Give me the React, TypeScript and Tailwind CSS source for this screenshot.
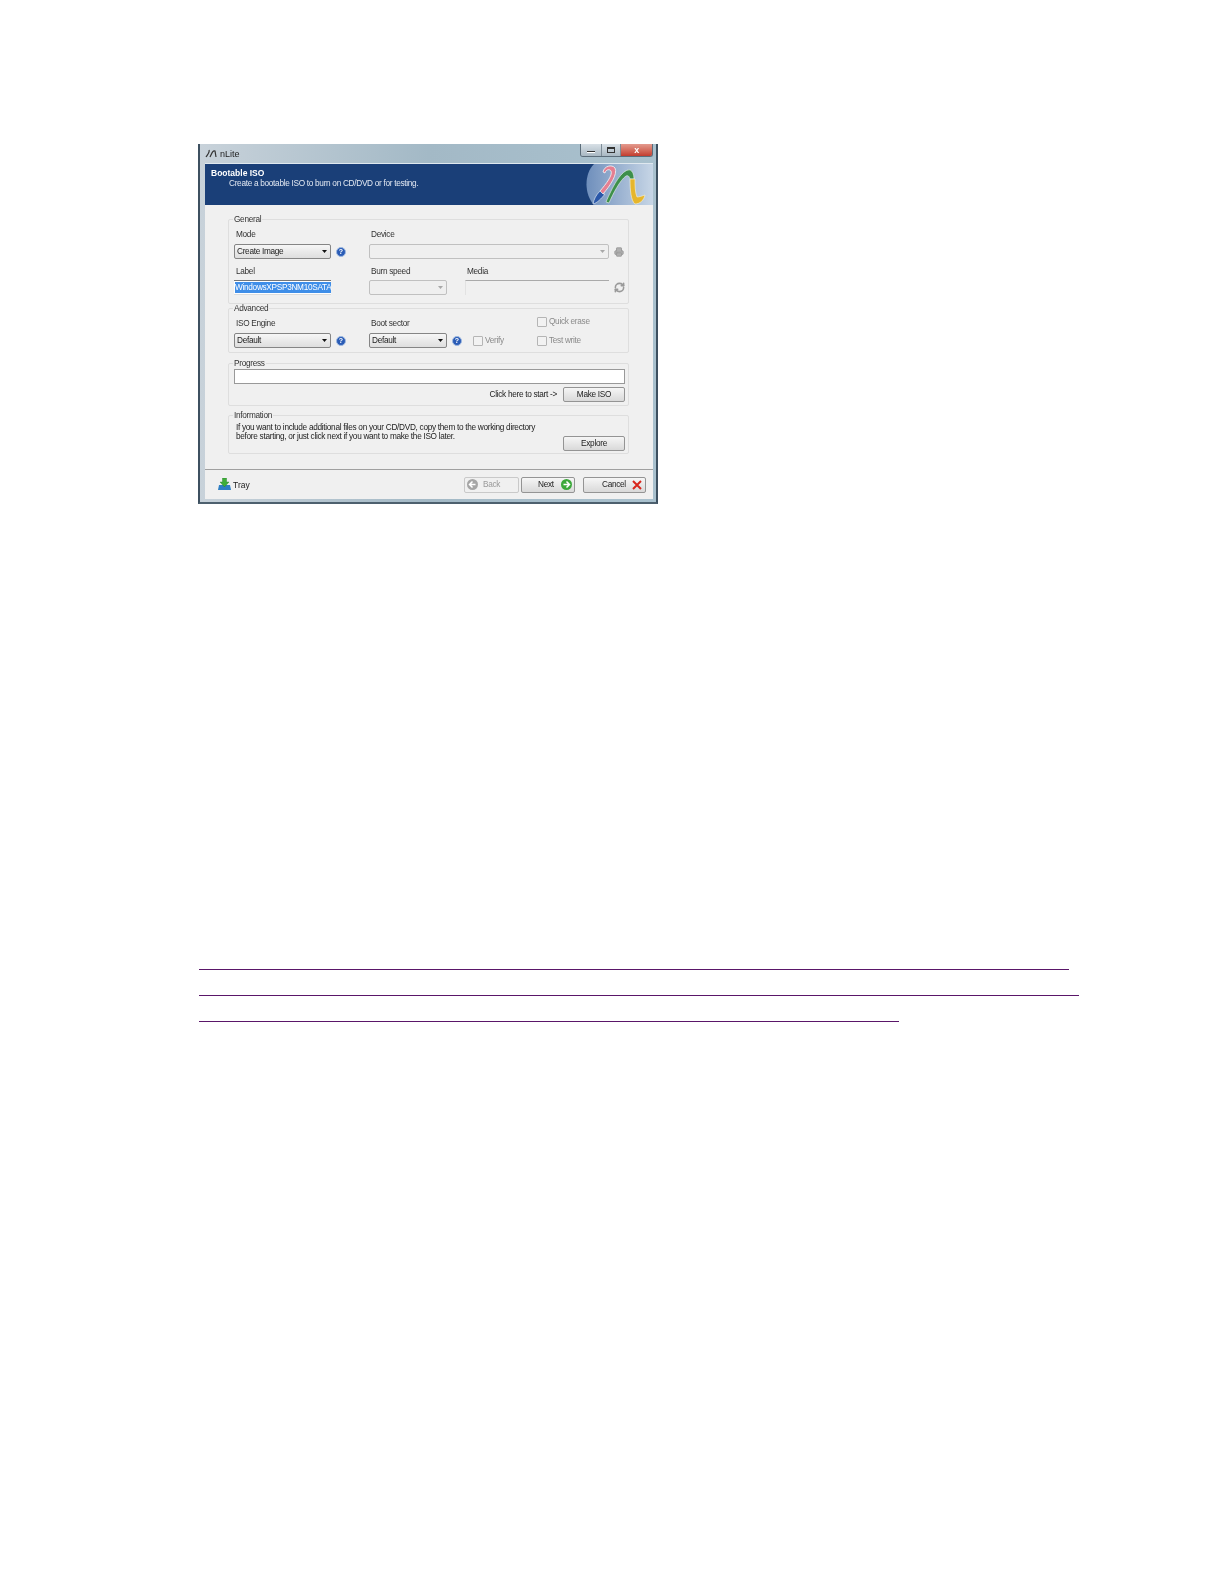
import type { ReactNode } from 'react';
import { Printer, RefreshCw } from 'lucide-react';

const btn = 'flex items-center border border-[#949494] rounded-[2px] bg-gradient-to-b from-[#f6f6f6] to-[#d9d9d9] text-[#222]';

function Arrow({ muted }: { muted?: boolean }) {
  return (
    <svg width="5" height="3" viewBox="0 0 5 3" className="shrink-0">
      <path d="M0 0h5L2.5 3z" fill={muted ? '#a8a8a8' : '#111'} />
    </svg>
  );
}

function Combo({ value, w, muted }: { value?: string; w: string; muted?: boolean }) {
  return (
    <div className={`${w} h-[15px] flex items-center justify-between pl-[2px] pr-[3px] rounded-[2px] border ${muted ? 'border-[#c0c0c0] bg-[#efefef]' : 'border-[#858585] bg-gradient-to-b from-[#f6f6f6] to-[#dedede]'}`}>
      <span className="text-[#222]">{value}</span>
      <Arrow muted={muted} />
    </div>
  );
}

function Help() {
  return (
    <div className="w-[10px] h-[10px] rounded-full bg-[#2a5cb6] border border-[#9db8e0] text-white text-[7px] font-bold leading-[8px] text-center tracking-normal shrink-0">?</div>
  );
}

function Check({ label, className }: { label: string; className?: string }) {
  return (
    <div className={`flex items-center gap-[2px] h-[10px] text-[#8a8a8a] ${className ?? ''}`}>
      <div className="w-[10px] h-[10px] border border-[#b5b5b5] bg-[#f2f2f2] rounded-[1px]" />
      <span>{label}</span>
    </div>
  );
}

function Field({ label, children, className, labelClass = 'mb-[4px]' }: { label: string; children: ReactNode; className?: string; labelClass?: string }) {
  return (
    <div className={`flex flex-col ${className ?? ''}`}>
      <div className={`h-[10px] leading-[10px] pl-[2px] text-[#333] ${labelClass}`}>{label}</div>
      <div className="flex items-center">{children}</div>
    </div>
  );
}

function Group({ title, h, className, children }: { title: string; h: string; className?: string; children: ReactNode }) {
  return (
    <div className={`relative ${h} ml-[23px] w-[401px] border border-[#dedede] rounded-[2px] ${className ?? ''}`}>
      <div className="absolute left-[4px] -top-[5px] h-[10px] leading-[10px] px-[1px] bg-[#f0f0f0] text-[#333]">{title}</div>
      {children}
    </div>
  );
}

function NLogo() {
  return (
    <svg width="67" height="41" viewBox="0 0 67 41" className="shrink-0">
      <defs>
        <linearGradient id="disc" x1="0" y1="0" x2="1" y2="0">
          <stop offset="0" stopColor="#6f8fbc" />
          <stop offset="1" stopColor="#c7d6e6" />
        </linearGradient>
      </defs>
      <path d="M8 0H67V41H8C-2 30-2 10 8 0Z" fill="url(#disc)" />
      <path d="M17 8C18 2 26 0 29 4C32 10 24 22 17 30L14 27C20 20 27 11 25 7C24 5 20 5 19 9Z" fill="#e57f92" stroke="#f6f6f6" strokeWidth="0.8" />
      <path d="M17 30L14 27C10 31 8 35 7 40C11 39 15 35 19 30Z" fill="#2a57a8" stroke="#e6eef7" strokeWidth="0.6" />
      <path d="M20 38C26 24 34 8 42 6C46 5 48 10 48 15L44 15C43 12 42 11 40 12C34 16 27 30 23 39Z" fill="#3d8f4a" stroke="#eef4ee" strokeWidth="0.6" />
      <path d="M44 15L49 15C49 22 49 28 51 33C53 33 56 32 59 31C58 36 54 40 49 40C45 37 44 26 44 15Z" fill="#e6b62c" stroke="#f7f3df" strokeWidth="0.6" />
    </svg>
  );
}

function TrayIcon() {
  return (
    <svg width="13" height="13" viewBox="0 0 13 13" className="shrink-0">
      <path d="M1 7h11l1 5H0z" fill="#2f7fc4" />
      <path d="M4.5 0h4v4H11L6.5 9 2 4h2.5z" fill="#3fae3a" stroke="#1f7a24" strokeWidth="0.4" />
    </svg>
  );
}

function RoundArrow({ fill, left }: { fill: string; left?: boolean }) {
  return (
    <svg width="11" height="11" viewBox="0 0 11 11" className="shrink-0">
      <circle cx="5.5" cy="5.5" r="5.5" fill={fill} />
      <path d={left ? 'M5.5 2.5L2.5 5.5l3 3M3 5.5h5.5' : 'M5.5 2.5l3 3-3 3M8 5.5H2.5'} fill="none" stroke="#fff" strokeWidth="1.5" />
    </svg>
  );
}

function CloseX() {
  return (
    <svg width="10" height="10" viewBox="0 0 10 10" className="shrink-0">
      <path d="M1 1l8 8M9 1L1 9" stroke="#d8261c" strokeWidth="2" />
    </svg>
  );
}

export default function App() {
  return (
    <div className="w-[1224px] h-[1584px] bg-white pt-[144px] pl-[198px] text-[8.25px] leading-[12px] tracking-[-0.3px] overflow-hidden [font-family:'Liberation_Sans',Arial,sans-serif]">
      <div className="relative w-[460px] h-[360px] flex flex-col pl-[5px] pr-[3px] pb-[3px] pt-[19px] bg-gradient-to-r from-[#c8d2da] via-[#a3b9c6] to-[#a9c1ce] border-x-2 border-b-2 border-x-[#3d5060] border-b-[#4d606e] blur-[0.4px]">
        {/* title bar */}
        <div className="absolute left-[5px] top-[2px] flex items-center gap-[3px] h-[15px]">
          <svg width="12" height="9" viewBox="0 0 12 9">
            <path d="M1 8C3 5 5 3 4 1M5 8C7 4 8 1 10 2L11 8" fill="none" stroke="#333" strokeWidth="1.2" />
          </svg>
          <span className="text-[9px] tracking-normal text-[#222]">nLite</span>
        </div>
        <div className="absolute right-[3px] top-0 flex h-[13px] border border-t-0 border-[#5c6d7a] rounded-b-[3px] overflow-hidden">
          <div className="w-[21px] flex items-end justify-center pb-[3px] bg-gradient-to-b from-[#d8e0e6] to-[#a9b8c3] border-r border-[#7d8c97]">
            <div className="w-[8px] h-[2px] bg-[#333] border-b border-white" />
          </div>
          <div className="w-[19px] flex items-center justify-center bg-gradient-to-b from-[#d8e0e6] to-[#a9b8c3] border-r border-[#7d8c97]">
            <div className="w-[8px] h-[6px] border border-[#333] border-t-2" />
          </div>
          <div className="w-[31px] flex items-center justify-center bg-gradient-to-b from-[#e39a8e] to-[#c23b2e] text-white text-[9px] font-bold leading-none">x</div>
        </div>

        {/* header */}
        <div className="h-[42px] shrink-0 flex justify-between bg-[#1a3f78] text-white border-t border-[#dfe8ef]">
          <div className="pl-[6px] pt-[4px]">
            <div className="text-[8.5px] font-bold leading-[10px] tracking-normal">Bootable ISO</div>
            <div className="pl-[18px] mt-px leading-[10px] text-[#e2e8f2]">Create a bootable ISO to burn on CD/DVD or for testing.</div>
          </div>
          <NLogo />
        </div>

        {/* content */}
        <div className="flex-1 bg-[#f0f0f0] pt-[14px] flex flex-col">
          <Group title="General" h="h-[85px]" className="pt-[10px] pl-[5px] mb-[4px]">
            <div className="flex">
              <Field label="Mode" className="w-[135px]">
                <Combo value="Create Image" w="w-[97px]" />
                <div className="ml-[5px]"><Help /></div>
              </Field>
              <Field label="Device">
                <Combo w="w-[240px]" muted />
                <Printer size={10} fill="#b0b0b0" strokeWidth={2.2} className="ml-[5px] text-[#999]" />
              </Field>
            </div>
            <div className="flex mt-[8px]">
              <Field label="Label" className="w-[135px]" labelClass="mb-[3px]">
                <div className="w-[97px] h-[15px] border-t border-[#777] border-b border-b-[#ddd] bg-white flex items-center pl-[1px]">
                  <span className="bg-[#3f8ee8] text-white whitespace-nowrap leading-[11px]">WindowsXPSP3NM10SATA</span>
                </div>
              </Field>
              <Field label="Burn speed" className="w-[96px]" labelClass="mb-[3px]">
                <Combo w="w-[78px]" muted />
              </Field>
              <Field label="Media" labelClass="mb-[3px]">
                <div className="w-[144px] h-[15px] border-t border-[#aaa] border-l border-l-[#e2e2e2]" />
                <RefreshCw size={11} strokeWidth={3.5} className="ml-[5px] text-[#9a9a9a]" />
              </Field>
            </div>
          </Group>

          <Group title="Advanced" h="h-[45px]" className="pt-[10px] pl-[5px] mb-[10px] flex">
            <Field label="ISO Engine" className="w-[135px]">
              <Combo value="Default" w="w-[97px]" />
              <div className="ml-[5px]"><Help /></div>
            </Field>
            <Field label="Boot sector" className="w-[168px]">
              <Combo value="Default" w="w-[78px]" />
              <div className="ml-[5px]"><Help /></div>
              <Check label="Verify" className="ml-[11px]" />
            </Field>
            <div className="flex flex-col gap-[9px] -mt-[2px]">
              <Check label="Quick erase" />
              <Check label="Test write" />
            </div>
          </Group>

          <Group title="Progress" h="h-[43px]" className="pt-[5px] pl-[5px] mb-[9px]">
            <div className="w-[391px] h-[15px] bg-white border-[1.5px] border-[#999]" />
            <div className="w-[391px] flex items-center justify-end gap-[6px] mt-[3px]">
              <span className="text-[#222]">Click here to start -&gt;</span>
              <div className={`${btn} justify-center w-[62px] h-[15px]`}>Make ISO</div>
            </div>
          </Group>

          <Group title="Information" h="h-[39px]" className="pt-[7px] pl-[7px] flex">
            <div className="w-[327px] leading-[9px] text-[#222] whitespace-nowrap">
              <div>If you want to include additional files on your CD/DVD, copy them to the working directory</div>
              <div>before starting, or just click next if you want to make the ISO later.</div>
            </div>
            <div className={`${btn} justify-center w-[62px] h-[15px] mt-[13px]`}>Explore</div>
          </Group>
        </div>

        {/* footer */}
        <div className="h-[30px] shrink-0 bg-[#f0f0f0] border-t border-[#a0a0a0] flex items-center pl-[13px] pr-[7px]">
          <TrayIcon />
          <span className="ml-[2px] text-[8.5px] tracking-normal text-[#222]">Tray</span>
          <div className="ml-auto flex items-center">
            <div className="w-[55px] h-[16px] flex items-center pl-[2px] gap-[5px] border border-[#c9c9c9] rounded-[2px] bg-[#f0f0f0] text-[#9a9a9a]">
              <RoundArrow fill="#a5a5a5" left />
              Back
            </div>
            <div className={`${btn} w-[54px] h-[16px] ml-[2px] gap-[7px] pl-[16px]`}>
              Next
              <RoundArrow fill="#3ca83a" />
            </div>
            <div className={`${btn} w-[63px] h-[16px] ml-[8px] gap-[6px] pl-[18px]`}>
              Cancel
              <CloseX />
            </div>
          </div>
        </div>
      </div>

      {/* link underlines */}
      <div className="mt-[465px] ml-px flex flex-col gap-[25px]">
        <div className="w-[870px] h-px bg-[#5a1669]" />
        <div className="w-[880px] h-px bg-[#5a1669]" />
        <div className="w-[700px] h-px bg-[#5a1669]" />
      </div>
    </div>
  );
}
